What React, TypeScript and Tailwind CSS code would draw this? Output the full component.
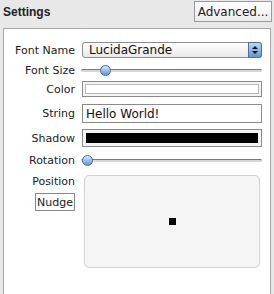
import React from 'react';

const font = { fontFamily: '"DejaVu Sans", "Liberation Sans", sans-serif' };

function Label({ children }: { children: React.ReactNode }) {
  return <div className="w-[71px] shrink-0 text-right text-[11px] leading-none text-[#222]">{children}</div>;
}

function Slider({ pos }: { pos: number }) {
  return (
    <div className="relative h-3 w-[181px]">
      <div className="absolute left-0 right-0 top-[5px] h-[3px] rounded-full border-t border-[#7a7a7a] bg-[#d6d6d6]" />
      <div
        className="absolute top-[1px] h-[11px] w-[11px] rounded-full border border-[#4a6f9e] bg-gradient-to-b from-[#d8e8fb] to-[#5c94d8]"
        style={{ left: pos }}
      />
    </div>
  );
}

export default function App() {
  return (
    <div className="h-[294px] w-[274px] overflow-hidden bg-[#e8e8e8]" style={font}>
      <div className="flex h-[28px] items-start justify-between pl-[3px] pr-[2px] pt-[1px]">
        <div
          className="mt-[5px] text-[12px] font-bold leading-none text-[#222]"
          style={{ fontFamily: '"Liberation Sans", sans-serif' }}
        >
          Settings
        </div>
        <button className="h-[21px] w-[78px] border border-[#9a9a9a] bg-gradient-to-b from-white to-[#ececec] text-[12px] leading-none text-[#222]">
          Advanced...
        </button>
      </div>
      <div className="ml-[3px] h-[266px] w-[268px] border-l border-r border-t border-[#a8a8a8] bg-white pt-[13px]">
        <div className="flex h-[16px] items-center gap-[7px]">
          <Label>Font Name</Label>
          <div className="flex h-[16px] w-[180px] items-center justify-between rounded-[3px] border border-[#8e8e8e] bg-gradient-to-b from-white to-[#e9e9e9] pl-[6px]">
            <span className="text-[12px] leading-none text-[#111]">LucidaGrande</span>
            <div className="-mr-px flex h-[16px] w-[14px] flex-col items-center justify-center rounded-r-[3px] border border-[#4d6fa0] bg-gradient-to-b from-[#bcd6f5] to-[#5f96d6]">
              <svg width="6" height="10" viewBox="0 0 6 10">
                <path d="M0 4 L3 1 L6 4 Z M0 6 L3 9 L6 6 Z" fill="#111" />
              </svg>
            </div>
          </div>
        </div>
        <div className="mt-[6px] flex h-[12px] items-center gap-[6px]">
          <Label>Font Size</Label>
          <Slider pos={19} />
        </div>
        <div className="mt-[5px] flex h-[16px] items-center gap-[7px]">
          <Label>Color</Label>
          <div className="flex h-[16px] w-[180px] items-center border border-[#8a8a8a] bg-[#f4f4f4] px-[2px]">
            <div className="h-[10px] w-full border border-[#b9b9b9] bg-white" />
          </div>
        </div>
        <div className="mt-[7px] flex h-[19px] items-center gap-[7px]">
          <Label>String</Label>
          <div className="flex h-[19px] w-[180px] items-center border border-[#8a8a8a] bg-white pl-[3px] text-[12px] leading-none text-[#111]">
            Hello World!
          </div>
        </div>
        <div className="mt-[6px] flex h-[18px] items-center gap-[7px]">
          <Label>Shadow</Label>
          <div className="flex h-[18px] w-[180px] items-center border border-[#8a8a8a] bg-[#f4f4f4] px-[3px]">
            <div className="h-[10px] w-full bg-black" />
          </div>
        </div>
        <div className="mt-[7px] flex h-[12px] items-center gap-[6px]">
          <Label>Rotation</Label>
          <Slider pos={1} />
        </div>
        <div className="mt-[9px] flex gap-[7px]">
          <div className="flex w-[71px] shrink-0 flex-col items-end">
            <div className="mt-[1px] text-[11px] leading-none text-[#222]">Position</div>
            <div className="mt-[6px] flex h-[18px] w-[40px] items-center justify-center border border-[#8a8a8a] bg-white text-[11px] leading-none text-[#222]">
              Nudge
            </div>
          </div>
          <div className="ml-[2px] flex h-[93px] w-[176px] items-center justify-center rounded-[5px] border border-[#d0d0d0] bg-[#f5f5f5]">
            <div className="h-[7px] w-[7px] bg-black" />
          </div>
        </div>
      </div>
    </div>
  );
}
